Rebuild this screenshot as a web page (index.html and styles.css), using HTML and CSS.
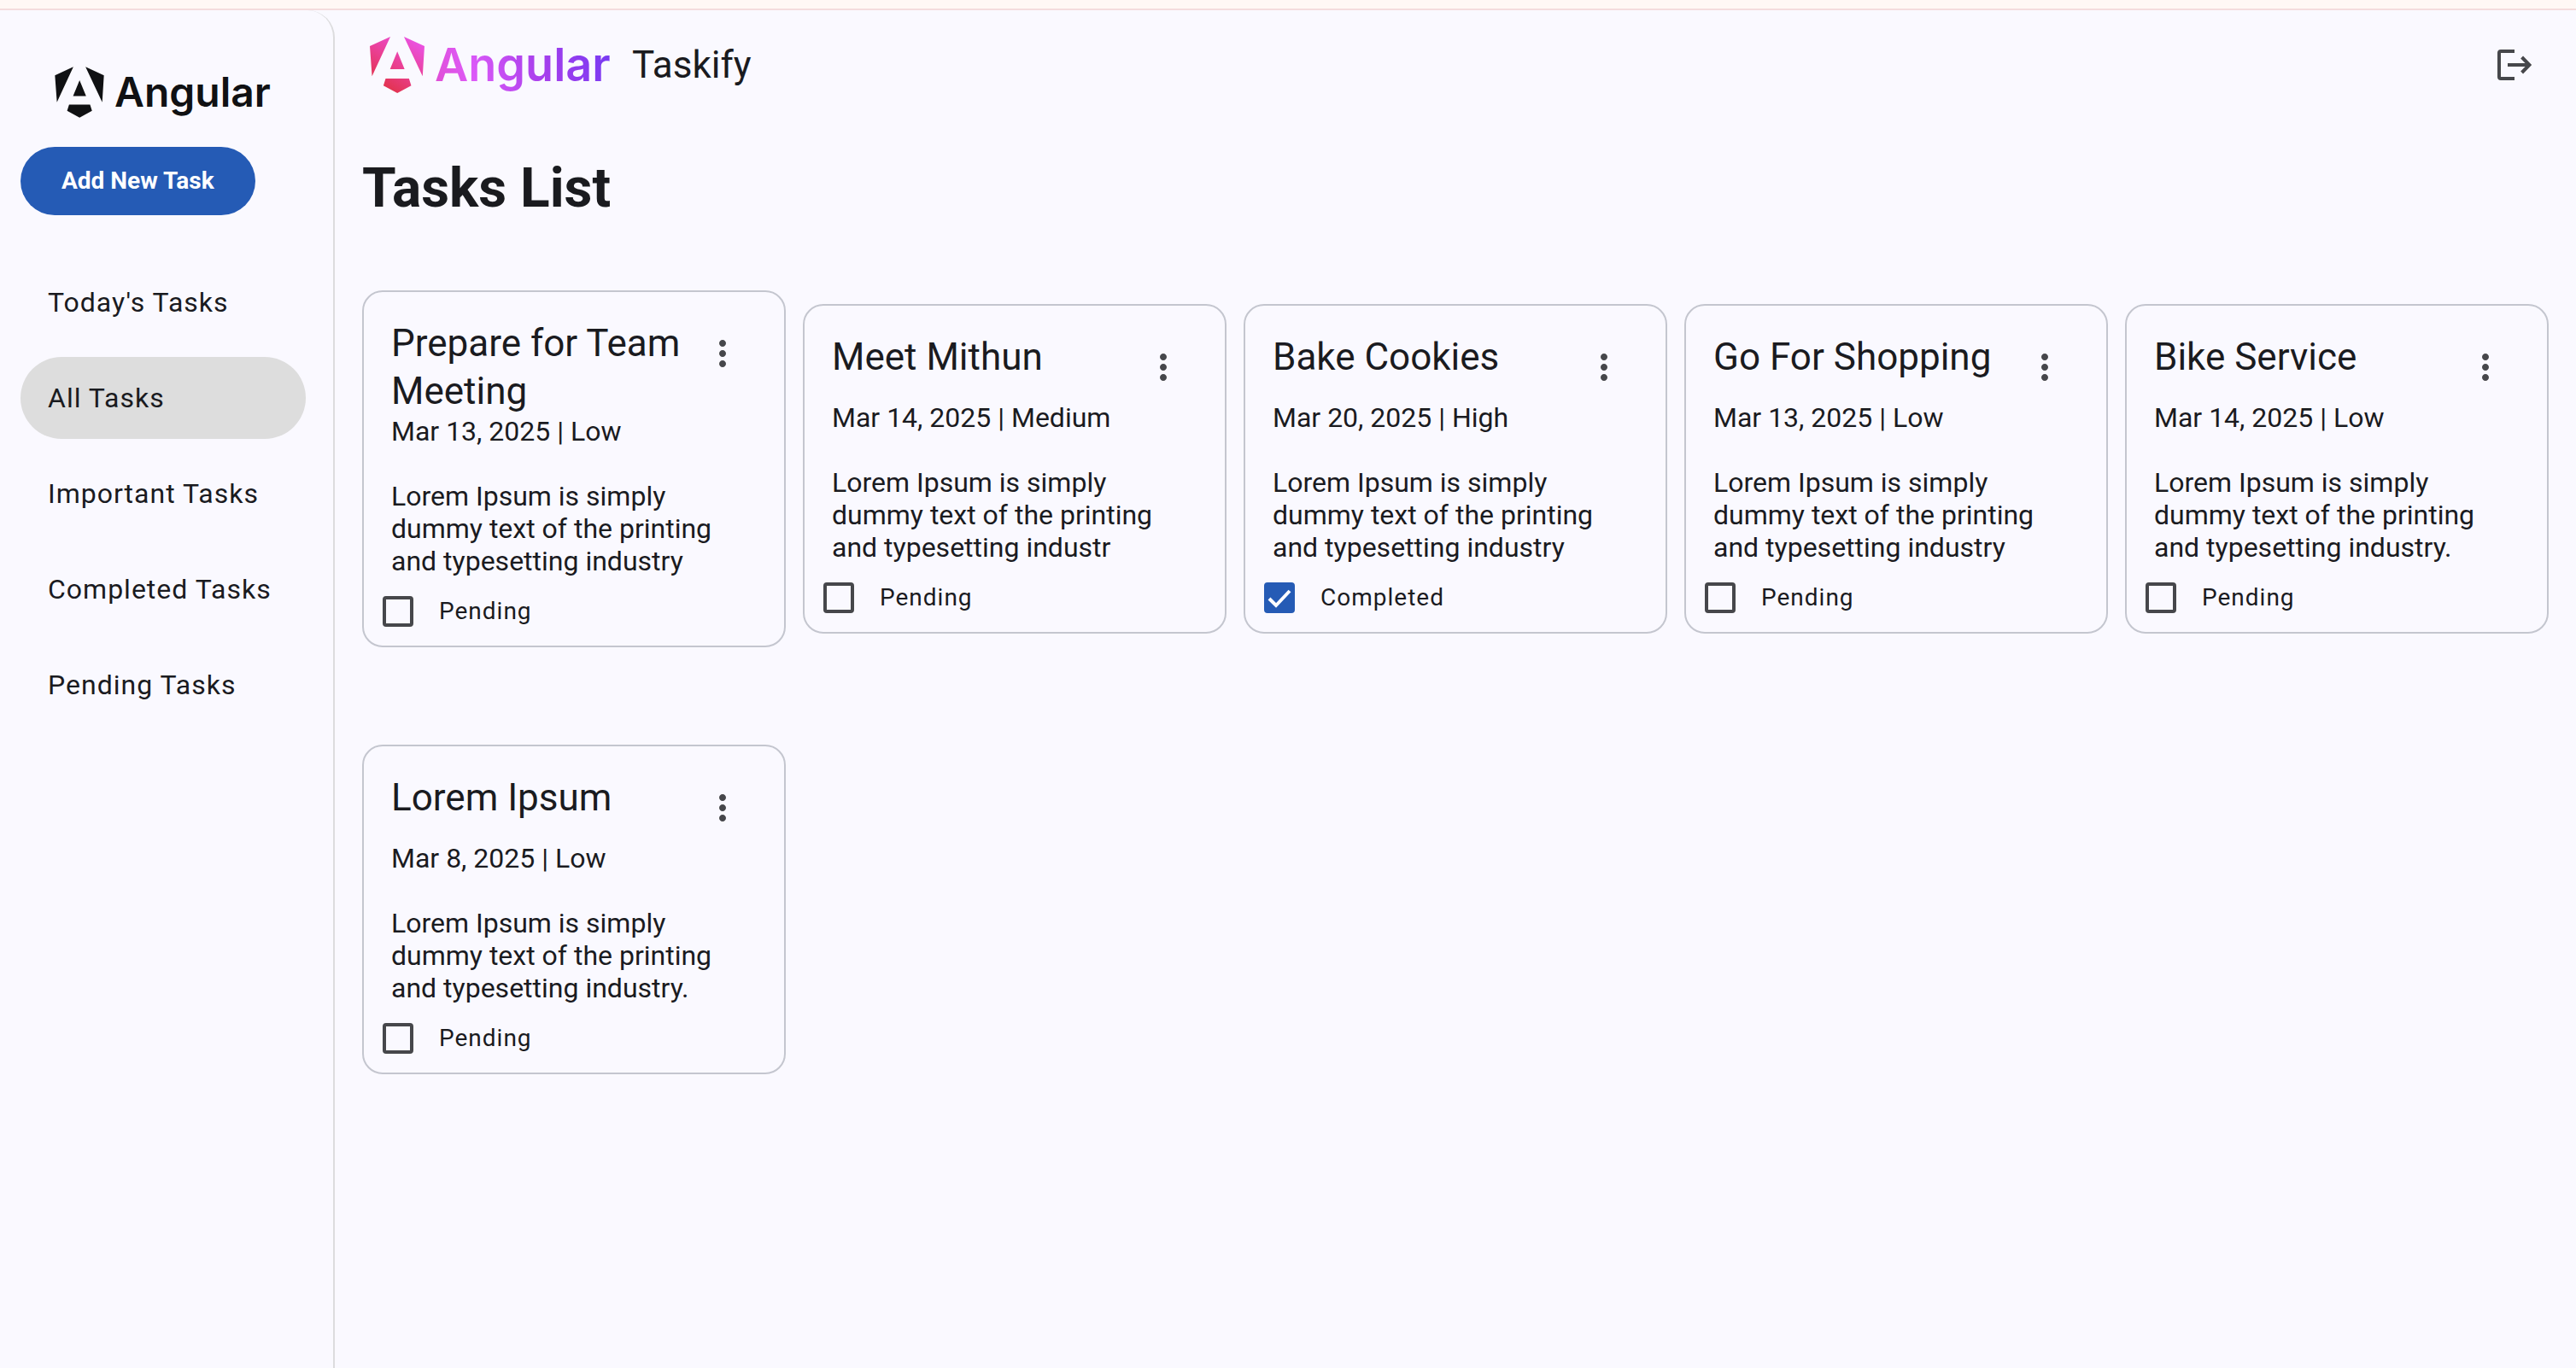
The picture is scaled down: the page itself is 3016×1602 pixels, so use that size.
FILE: index.html
```html
<!DOCTYPE html>
<html lang="en">
<head>
<meta charset="utf-8">
<meta name="viewport" content="width=device-width, initial-scale=1">
<title>Taskify</title>
<link rel="stylesheet" href="styles.css">
</head>
<body>
<svg class="defs" width="0" height="0" aria-hidden="true">
  <defs>
    <linearGradient id="shield-gradient" gradientUnits="userSpaceOnUse" x1="230" y1="410" x2="340" y2="240">
      <stop offset="0" stop-color="#e0303f"/>
      <stop offset="0.5" stop-color="#ea3f92"/>
      <stop offset="1" stop-color="#ea53e6"/>
    </linearGradient>
    <path id="shield" d="M193 263 258 233 200 358ZM301 233 366 263 360 358ZM280 280 303 336H257ZM243 366H317L324 388 280 412 236 388Z"/>
    <path id="more" d="M12 8c1.100 0 2-.9 2-2s-.9-2-2-2-2 .9-2 2 .9 2 2 2zm0 2c-1.100 0-2 .9-2 2s.9 2 2 2 2-.9 2-2-.9-2-2-2zm0 6c-1.100 0-2 .9-2 2s.9 2 2 2 2-.9 2-2-.9-2-2-2z"/>
  </defs>
</svg>
<div class="app">
  <aside class="sidebar">
    <div class="logo logo-dark">
      <svg class="shield" viewBox="193 232 173 181" aria-hidden="true"><use href="#shield"/></svg>
      <span class="wordmark">Angular</span>
    </div>
    <button class="add" type="button">Add New Task</button>
    <nav class="nav">
      <a href="#today">Today's Tasks</a>
      <a href="#all" class="active" aria-current="page">All Tasks</a>
      <a href="#important">Important Tasks</a>
      <a href="#completed">Completed Tasks</a>
      <a href="#pending">Pending Tasks</a>
    </nav>
  </aside>
  <div class="content">
    <header class="toolbar">
      <div class="logo logo-color">
        <svg class="shield" viewBox="193 232 173 181" aria-hidden="true"><use href="#shield"/></svg>
        <span class="wordmark">Angular</span>
      </div>
      <span class="app-name">Taskify</span>
      <button class="icon-button" type="button" aria-label="Log out">
        <svg class="logout" viewBox="0 0 24 24" aria-hidden="true"><path d="M12 4H4a1 1 0 0 0-1 1v14a1 1 0 0 0 1 1h8M8 12h12.500M16.300 7.500 20.700 12 16.300 16.500"/></svg>
      </button>
    </header>
    <main>
      <h1>Tasks List</h1>
      <div class="cards">
        <article class="card">
          <div class="card-head">
            <h2>Prepare for Team Meeting</h2>
            <button class="icon-button" type="button" aria-label="Task options"><svg viewBox="0 0 24 24" aria-hidden="true"><use href="#more"/></svg></button>
          </div>
          <p class="meta">Mar 13, 2025 | Low</p>
          <p class="text">Lorem Ipsum is simply dummy text of the printing and typesetting industry</p>
          <label class="status"><input type="checkbox"><span>Pending</span></label>
        </article>
        <article class="card">
          <div class="card-head">
            <h2>Meet Mithun</h2>
            <button class="icon-button" type="button" aria-label="Task options"><svg viewBox="0 0 24 24" aria-hidden="true"><use href="#more"/></svg></button>
          </div>
          <p class="meta">Mar 14, 2025 | Medium</p>
          <p class="text">Lorem Ipsum is simply dummy text of the printing and typesetting industr</p>
          <label class="status"><input type="checkbox"><span>Pending</span></label>
        </article>
        <article class="card">
          <div class="card-head">
            <h2>Bake Cookies</h2>
            <button class="icon-button" type="button" aria-label="Task options"><svg viewBox="0 0 24 24" aria-hidden="true"><use href="#more"/></svg></button>
          </div>
          <p class="meta">Mar 20, 2025 | High</p>
          <p class="text">Lorem Ipsum is simply dummy text of the printing and typesetting industry</p>
          <label class="status"><input type="checkbox" checked><span>Completed</span></label>
        </article>
        <article class="card">
          <div class="card-head">
            <h2>Go For Shopping</h2>
            <button class="icon-button" type="button" aria-label="Task options"><svg viewBox="0 0 24 24" aria-hidden="true"><use href="#more"/></svg></button>
          </div>
          <p class="meta">Mar 13, 2025 | Low</p>
          <p class="text">Lorem Ipsum is simply dummy text of the printing and typesetting industry</p>
          <label class="status"><input type="checkbox"><span>Pending</span></label>
        </article>
        <article class="card">
          <div class="card-head">
            <h2>Bike Service</h2>
            <button class="icon-button" type="button" aria-label="Task options"><svg viewBox="0 0 24 24" aria-hidden="true"><use href="#more"/></svg></button>
          </div>
          <p class="meta">Mar 14, 2025 | Low</p>
          <p class="text">Lorem Ipsum is simply dummy text of the printing and typesetting industry.</p>
          <label class="status"><input type="checkbox"><span>Pending</span></label>
        </article>
        <article class="card">
          <div class="card-head">
            <h2>Lorem Ipsum</h2>
            <button class="icon-button" type="button" aria-label="Task options"><svg viewBox="0 0 24 24" aria-hidden="true"><use href="#more"/></svg></button>
          </div>
          <p class="meta">Mar 8, 2025 | Low</p>
          <p class="text">Lorem Ipsum is simply dummy text of the printing and typesetting industry.</p>
          <label class="status"><input type="checkbox"><span>Pending</span></label>
        </article>
      </div>
    </main>
  </div>
</div>
</body>
</html>
```
FILE: styles.css
```css
:root {
  --surface: #faf9ff;
  --ink: #1a1b1f;
  --icon: #46474b;
  --outline: #c4c6cf;
  --primary: #255bb5;
}

* { box-sizing: border-box; }

body {
  margin: 0;
  padding-top: 10px;
  background: #fff8f5;
  color: var(--ink);
  font: 32px/38px Roboto, "Liberation Sans", sans-serif;
}

h1, h2, p { margin: 0; }

button { font: inherit; border: 0; cursor: pointer; }

/* gradient and icon definitions shared by the inline SVGs */
.defs { position: absolute; }

.app {
  display: flex;
  min-height: calc(100vh - 10px);
  border-top: 2px solid #f4dcdd;
  background: var(--surface);
}

.sidebar {
  flex: none;
  width: 392px;
  padding: 64px 32px 32px 24px;
  border-right: 2px solid #dcdcde;
  border-top-right-radius: 32px;
}

.logo { display: flex; align-items: center; }
.wordmark { font-family: Inter, "Liberation Sans", sans-serif; font-weight: 600; }

.logo-dark { height: 64px; padding-left: 40px; gap: 12px; color: #101113; }
.logo-dark .shield { width: 58px; height: 60px; fill: #101113; }
.logo-dark .wordmark { font-size: 48px; line-height: 64px; }

.add {
  display: block;
  height: 80px;
  margin: 32px 0 54px;
  padding: 0 48px;
  border-radius: 40px;
  background: var(--primary);
  color: #fff;
  font-size: 28px;
  font-weight: 700;
}

.nav { display: flex; flex-direction: column; gap: 16px; }
.nav a {
  padding: 29px 32px;
  border-radius: 48px;
  color: inherit;
  letter-spacing: 1px;
  text-decoration: none;
}
.nav .active { background: #dddddd; }

.content { flex: 1; min-width: 0; padding: 0 32px; }

.toolbar { display: flex; align-items: center; height: 128px; }
.logo-color { width: 308px; padding-left: 9px; gap: 12px; }
.logo-color .shield { width: 64px; height: 68px; fill: url(#shield-gradient); }
.logo-color .wordmark {
  font-size: 54px;
  line-height: 72px;
  color: transparent;
  background: linear-gradient(75deg, #e04fd8 4%, #dd5af8 22%, #a63fec 60%, #7a3af2 95%);
  background-clip: text;
  -webkit-background-clip: text;
}
.app-name { margin-left: 8px; font-size: 44px; line-height: 56px; }
.toolbar .icon-button { margin-left: auto; }

.icon-button {
  flex: none;
  width: 80px;
  height: 80px;
  padding: 16px;
  background: none;
}
.icon-button svg { display: block; width: 48px; height: 48px; fill: var(--icon); }
.icon-button .logout { fill: none; stroke: var(--icon); stroke-width: 2; }

h1 { margin: 44px 0 82px; font-size: 64px; line-height: 74px; font-weight: 700; }

.cards {
  display: grid;
  grid-template-columns: repeat(5, minmax(0, 1fr));
  gap: 114px 20px;
  align-items: center;
}
.card { padding: 32px 32px 0; border: 2px solid var(--outline); border-radius: 24px; }
.card-head { display: flex; align-items: flex-start; justify-content: space-between; }
.card h2 { font-size: 44px; line-height: 56px; font-weight: 400; }
.text { margin-top: 38px; }

.status {
  display: flex;
  align-items: center;
  gap: 30px;
  height: 80px;
  margin-left: -10px;
  font-size: 28px;
  letter-spacing: 1px;
}
.status input {
  appearance: none;
  width: 36px;
  height: 36px;
  margin: 0;
  border: 4px solid var(--icon);
  border-radius: 4px;
}
.status input:checked {
  border-color: var(--primary);
  background: var(--primary) url("data:image/svg+xml,%3Csvg xmlns='http://www.w3.org/2000/svg' viewBox='0 0 28 28'%3E%3Cpath d='M2 15l8 8L26 6' fill='none' stroke='white' stroke-width='4'/%3E%3C/svg%3E") center / 28px no-repeat;
}
```
